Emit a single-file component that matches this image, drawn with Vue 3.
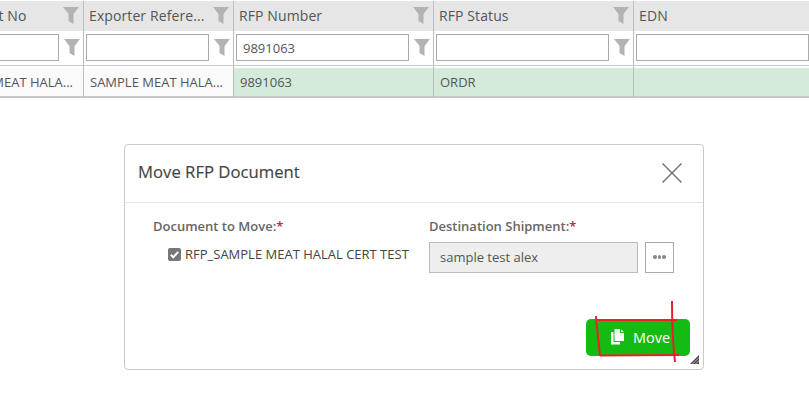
<script setup>
const columns = [
  { title: 'Shipment No', filter: '', value: 'SAMPLE MEAT HALA...', cls: 'first' },
  { title: 'Exporter Refere...', filter: '', value: 'SAMPLE MEAT HALA...', cls: '' },
  { title: 'RFP Number', filter: '9891063', value: '9891063', cls: 'hl' },
  { title: 'RFP Status', filter: '', value: 'ORDR', cls: 'hl' },
  { title: 'EDN', filter: '', value: '', cls: 'hl last' },
]
</script>

<template>
  <div class="page">
    <div class="grid">
      <div v-for="c in columns" :key="c.title" class="col" :class="c.cls">
        <div class="head">
          <span class="title">{{ c.title }}</span>
          <svg v-if="!c.cls.includes('last')" class="funnel" width="16" height="17" viewBox="0 0 16 17"><path d="M0 0H16L10.5 7V17L5.5 14V7Z" /></svg>
        </div>
        <div class="filter">
          <input class="finput" :value="c.filter" readonly />
          <svg v-if="!c.cls.includes('last')" class="funnel" width="16" height="17" viewBox="0 0 16 17"><path d="M0 0H16L10.5 7V17L5.5 14V7Z" /></svg>
        </div>
        <div class="cell"><span class="val">{{ c.value }}</span></div>
      </div>
    </div>

    <section class="modal">
      <header class="mhead">
        <h2>Move RFP Document</h2>
        <svg width="22" height="22" viewBox="0 0 22 22" class="close"><path d="M1.5 1.5L20.5 20.5M20.5 1.5L1.5 20.5" stroke="#6f6f6f" stroke-width="1.4" fill="none" /></svg>
      </header>
      <div class="mbody">
        <div class="left">
          <label class="lbl">Document to Move:<em>*</em></label>
          <div class="doc">
            <span class="check"><svg width="13" height="13" viewBox="0 0 13 13"><path d="M2.8 6.8L5.3 9.3L10.2 3.8" stroke="#fff" stroke-width="2" fill="none" /></svg></span>
            <span>RFP_SAMPLE MEAT HALAL CERT TEST</span>
          </div>
        </div>
        <div class="right">
          <label class="lbl">Destination Shipment:<em>*</em></label>
          <div class="dest">
            <div class="destinput">sample test alex</div>
            <div class="more"><i></i><i></i><i></i></div>
          </div>
        </div>
      </div>
      <footer class="mfoot">
        <button class="move">
          <svg width="15" height="16" viewBox="0 0 15 16"><path d="M4.5 0H10V4H14V12H4.5Z" fill="#fff" /><path d="M11 .3L13.8 3H11Z" fill="#fff" /><path d="M1 3H3.5V13H10V15.5H1Z" fill="#fff" /></svg>
          <span>Move</span>
        </button>
      </footer>
      <svg class="grip" width="9" height="9" viewBox="0 0 9 9"><path d="M0 9L9 0V9Z" fill="#444" /><path d="M2.5 9L9 2.5M5.5 9L9 5.5" stroke="#ddd" stroke-width=".8" /></svg>
      <svg class="scribble" width="100" height="70" viewBox="0 0 100 70">
        <path d="M10 16C11 30 13 45 14 56" />
        <path d="M12 20L91 20" />
        <path d="M14 55.5L93 55" />
        <path d="M86 1C86 25 87 45 89 62" />
      </svg>
    </section>
  </div>
</template>

<style>
body { margin: 0; background: #fff; }
</style>

<style scoped>
.page {
  width: 809px;
  height: 416px;
  overflow: hidden;
  position: relative;
  font-family: "Open Sans", "Liberation Sans", sans-serif;
  color: #555;
}
.grid {
  display: grid;
  grid-template-columns: 84px 150px 200px 200px 175px;
  padding-top: 1px;
}
.col { min-width: 0; border-right: 1px solid #bdbdbd; box-sizing: border-box; }
.col.last { border-right: 0; }
.head {
  height: 30px;
  box-sizing: border-box;
  background: #e6e6e6;
  display: flex;
  align-items: center;
  justify-content: space-between;
  padding: 0 3px 1px 5px;
  font-size: 14px;
  color: #555;
  overflow: hidden;
}
.title { white-space: nowrap; letter-spacing: .1px; }
.first .head { padding-left: 0; }
.first .title { margin-left: -60px; }
.filter {
  height: 35px;
  display: flex;
  align-items: center;
  gap: 5px;
  padding: 0 2px 1px 2px;
  box-sizing: border-box;
  border-bottom: 1px solid #c8c8c8;
}
.first .filter { padding-left: 0; }
.last .filter { padding-right: 0; }
.finput {
  flex: 1;
  min-width: 0;
  height: 27px;
  box-sizing: border-box;
  border: 1px solid #aaa;
  padding: 0 6px;
  font: 13px "Open Sans", sans-serif;
  color: #555;
  outline: none;
  background: #fff;
}
.first .finput { margin-left: -10px; }
.funnel { flex: none; fill: #b3b3b3; margin-right: 1px; }
.cell {
  margin-top: 2px;
  height: 30px;
  box-sizing: border-box;
  background: #fafafa;
  border-bottom: 2px solid #c8c8c8;
  display: flex;
  align-items: center;
  padding: 0 6px;
  font-size: 13px;
  overflow: hidden;
  white-space: nowrap;
}
.first .cell { padding-left: 0; }
.first .val { margin-left: -60px; }
.hl .cell { background: #d4ebdb; }
.modal {
  position: absolute;
  left: 124px;
  top: 144px;
  width: 580px;
  height: 226px;
  box-sizing: border-box;
  border: 1px solid #c9c9c9;
  border-radius: 4px;
  background: #fff;
  display: flex;
  flex-direction: column;
}
.mhead {
  height: 58px;
  flex: none;
  box-sizing: border-box;
  border-bottom: 1px solid #e5e5e5;
  display: flex;
  align-items: center;
  justify-content: space-between;
  padding: 0 20px 4px 13px;
}
.mhead h2 { margin: 0; font-size: 16.7px; font-weight: 400; color: #444; -webkit-text-stroke: .15px #444; }
.close { flex: none; margin-top: 3px; }
.mbody { display: flex; padding: 14px 0 0 28px; height: 80px; box-sizing: content-box; }
.left { width: 276px; }
.lbl { display: block; font-size: 13px; font-weight: 600; color: #666; line-height: 18px; }
.lbl em { color: #c0272d; font-style: normal; }
.doc {
  display: flex;
  align-items: center;
  gap: 4px;
  margin: 10px 0 0 15px;
  font-size: 13px;
  color: #444;
  line-height: 18px;
}
.check {
  width: 13px;
  height: 13px;
  background: #777;
  border-radius: 2px;
  display: inline-flex;
}
.dest { display: flex; gap: 7px; margin-top: 7px; }
.destinput {
  width: 209px;
  height: 31px;
  box-sizing: border-box;
  background: #eee;
  border: 1px solid #bbb;
  padding: 0 10px;
  font-size: 13px;
  line-height: 29px;
  color: #555;
}
.more {
  width: 29px;
  height: 31px;
  box-sizing: border-box;
  border: 1px solid #aaa;
  display: flex;
  align-items: center;
  justify-content: center;
  gap: 1px;
  padding-bottom: 1px;
}
.more i { width: 3.5px; height: 3.5px; border-radius: 50%; background: #8a8a8a; }
.mfoot { display: flex; justify-content: flex-end; padding: 22px 13px 0 0; }
.move {
  width: 104px;
  height: 37px;
  border: 0;
  border-radius: 5px;
  background: #14bb12;
  color: #fff;
  font: 400 14.5px "Open Sans", sans-serif;
  display: flex;
  align-items: center;
  gap: 8px;
  padding: 0 0 1px 24px;
}
.grip { position: absolute; right: 4px; bottom: 5px; }
.scribble { position: absolute; left: 461px; top: 155px; pointer-events: none; }
.scribble path { stroke: #e2232a; stroke-width: 2; fill: none; }
</style>
